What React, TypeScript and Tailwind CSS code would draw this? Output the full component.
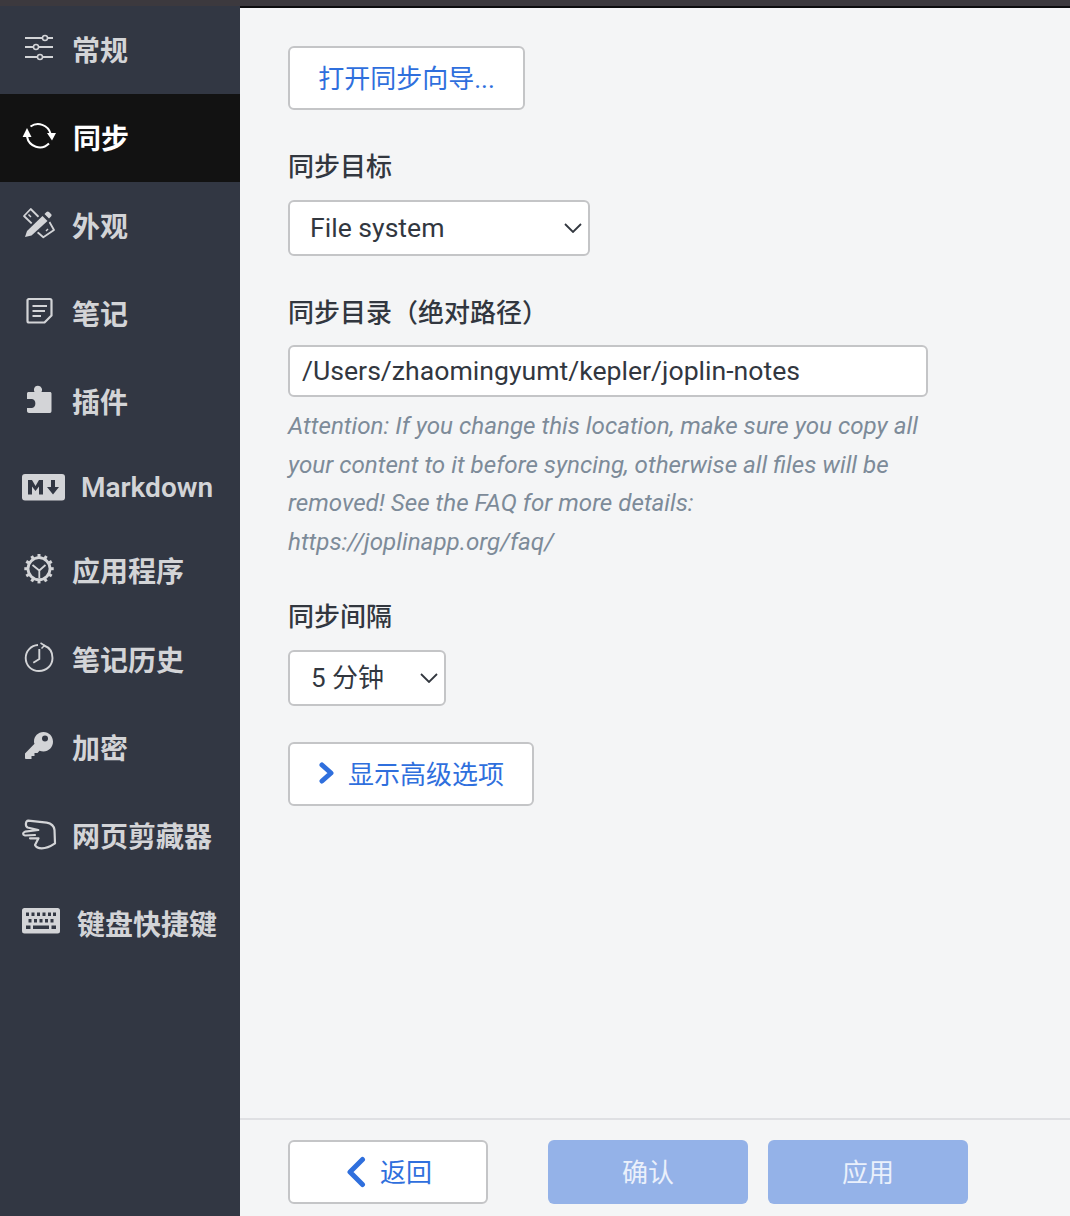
import React from "react";

const I = ({ children, w = 34 }: { children: React.ReactNode; w?: number }) => (
  <svg width={w} height="32" viewBox={`0 0 ${w} 32`} fill="none" stroke="currentColor" strokeWidth="2" className="shrink-0 overflow-visible">
    {children}
  </svg>
);

const Sliders = () => (
  <I>
    <path d="M3 4H20.500M25.500 4H31M3 13H11.500M16.500 13H31M3 23H15.500M20.500 23H31" strokeWidth="1.800" />
    <circle cx="23" cy="4" r="2.500" strokeWidth="1.500" />
    <circle cx="14" cy="13" r="2.500" strokeWidth="1.500" />
    <circle cx="18" cy="23" r="2.500" strokeWidth="1.500" />
  </I>
);
const Sync = () => (
  <I>
    <path d="M8.500 4.500A13 13 0 0 1 28.500 11.500" strokeWidth="2" />
    <path d="M5 14.500A13 13 0 0 0 27 21.500" strokeWidth="2" />
    <path d="M0.600 15L5 6L9.500 15Z" fill="currentColor" stroke="none" />
    <path d="M25 11L34 11L30 18.500Z" fill="currentColor" stroke="none" />
  </I>
);
const Pencil = () => (
  <I>
    <path d="M2 6L8.700 -1L19.700 10L13 16.700Z" strokeWidth="1.800" strokeLinejoin="round" />
    <path d="M6.500 4.500L9 7" strokeWidth="1.500" />
    <path d="M26.300 10L32 20L21.300 27.300L13 20Z" strokeWidth="1.800" strokeLinejoin="round" />
    <path d="M24 21L26 19" strokeWidth="1.500" />
    <path d="M3 27L5 20.500L23.500 2.500L29.500 8L10 25Z" fill="#323743" stroke="#323743" strokeWidth="3.500" />
    <path d="M3 27L5 21L20.500 6L25.500 11L9.500 25.500Z" fill="currentColor" stroke="none" />
    <path d="M22.500 4L24.500 2C25.300 1.200 26.200 1.200 27 2L29 4C29.800 4.800 29.800 5.700 29 6.500L27 8.500Z" fill="currentColor" stroke="none" />
  </I>
);
const Note = () => (
  <I>
    <path d="M7.500 1H29C30 1 30.500 1.500 30.500 2.500V17.500L23.500 24.500H8C7 24.500 6.500 24 6.500 23V2Z" strokeWidth="2.200" strokeLinejoin="round" />
    <path d="M11.500 8H26M11.500 13H24M11.500 18H20" strokeWidth="1.900" />
  </I>
);
const Puzzle = () => (
  <I>
    <path
      fill="currentColor"
      stroke="none"
      d="M7.500 6H13.500C13 5 12.800 4 13 3C13.500 -1.500 20 -1.500 21 3C21.200 4 21 5 20.500 6H29C29.800 6 30.500 6.700 30.500 7.500V25C30.500 26 29.800 27 29 27H8C7 27 6 26 6 25V22H11C15.500 22 15.500 13 11 13H6V7.500C6 6.700 6.700 6 7.500 6Z"
    />
  </I>
);
const MarkdownIcon = () => (
  <svg width="43" height="28" viewBox="0 0 43 28" className="shrink-0">
    <rect x="0" y="1" width="43" height="26.500" rx="3" fill="currentColor" />
    <path d="M6 21.500V7H10L13.500 13L17 7H21V21.500H17V13.500L13.500 18L10 13.500V21.500Z" fill="#323743" />
    <path d="M29 7H33V14H37L31 21.500L25 14H29Z" fill="#323743" />
  </svg>
);
const Gear = () => {
  const teeth = Array.from({ length: 12 }, (_, i) => i * 30);
  return (
    <I>
      <circle cx="17" cy="13.700" r="11" strokeWidth="2.800" />
      {teeth.map((a) => (
        <rect key={a} x="15.500" y="-1" width="3" height="4" fill="currentColor" stroke="none" transform={`rotate(${a} 17 13.700)`} />
      ))}
      <path d="M17.300 15.500L10.500 10M17.300 15.500L23.500 10M17.300 15.500V23" strokeWidth="1.800" />
    </I>
  );
};
const Clock = () => (
  <I>
    <path d="M22 1.500C27.500 3.500 30.500 8.500 30.500 14C30.500 21.500 24.500 27 17 27C9.500 27 3.700 21.500 3.700 14C3.700 7 9 1.500 16 1" strokeWidth="1.900" />
    <path d="M18.500 -1L22.500 1.500L19.500 4.500" strokeWidth="1.500" />
    <path d="M17.300 5V15L11.300 18.700" strokeWidth="1.900" />
  </I>
);
const Key = () => (
  <I>
    <path
      fill="currentColor"
      fillRule="evenodd"
      stroke="none"
      d="M22.500 0C28 0 32 4.300 32 9.700C32 15 27.500 19.500 22.500 19.500C21 19.500 19.800 19.200 18.500 18.700L16.500 21H13.500V24H10.500V27H5C4.500 27 4 26.500 4 26V21.500L13.500 11.700C13 10.800 13 10 13 9.500C13 4.300 17 0 22.500 0ZM24 3.500A3 3 0 1 0 24 9.500A3 3 0 1 0 24 3.500Z"
    />
  </I>
);
const Clipper = () => (
  <I>
    <path
      d="M6.300 0.700L24.700 2.700C29 3.500 32 6 32.500 10L33 23.300C29 26 24 28.300 19.700 28.300C16.500 28.300 14 27 13 25L16.500 18.300H8M16.300 10L5.500 7.500C3 6 3.500 1 6.300 0.700M16.300 10L3 11.700C0.500 12.500 0.500 15 3 15.500L13 15"
      strokeWidth="2.200"
      strokeLinejoin="round"
      strokeLinecap="round"
    />
  </I>
);
const Keyboard = () => (
  <svg width="38" height="26" viewBox="0 0 38 26" className="shrink-0 mb-[6px]">
    <rect x="0" y="0" width="38" height="25.500" rx="2.500" fill="currentColor" />
    <g fill="#323743">
      {[4, 9.500, 15, 20.500, 26, 31].map((x) => (
        <rect key={x} x={x} y="4.500" width="3" height="3.500" />
      ))}
      {[6.500, 12, 17.500, 23, 28.500].map((x) => (
        <rect key={x} x={x} y="11" width="3" height="3.500" />
      ))}
      <rect x="4" y="17.500" width="4.500" height="3.500" />
      <rect x="11" y="17.500" width="16" height="3.500" />
      <rect x="29.500" y="17.500" width="4.500" height="3.500" />
    </g>
  </svg>
);

const items: { icon: React.ReactNode; label: string; cls: string; text?: string; active?: boolean }[] = [
  { icon: <Sliders />, label: "常规", cls: "h-[88px] pl-[22px] gap-[16px]" },
  { icon: <Sync />, label: "同步", cls: "h-[88px] pl-[22px] gap-[17px]", active: true },
  { icon: <Pencil />, label: "外观", cls: "h-[88px] pl-[22px] gap-[16px]" },
  { icon: <Note />, label: "笔记", cls: "h-[88px] pl-[21px] gap-[17px]" },
  { icon: <Puzzle />, label: "插件", cls: "h-[88px] pl-[21px] gap-[17px]" },
  { icon: <MarkdownIcon />, label: "Markdown", cls: "h-[81px] pl-[22px] gap-[16px]", text: "mt-[2px]" },
  { icon: <Gear />, label: "应用程序", cls: "h-[88px] pl-[22px] gap-[16px]" },
  { icon: <Clock />, label: "笔记历史", cls: "h-[89px] pl-[22px] gap-[16px]" },
  { icon: <Key />, label: "加密", cls: "h-[88px] pl-[21px] gap-[17px]" },
  { icon: <Clipper />, label: "网页剪藏器", cls: "h-[88px] pl-[22px] gap-[16px]" },
  { icon: <Keyboard />, label: "键盘快捷键", cls: "h-[88px] pl-[22px] gap-[17px]" },
];

const Label = ({ children, className = "" }: { children: React.ReactNode; className?: string }) => (
  <div className={`pt-[2px] text-[26px] leading-[34px] font-medium text-[#32373f] ${className}`}>{children}</div>
);

const SelectChevron = () => (
  <svg width="18" height="10" viewBox="0 0 18 10" fill="none" stroke="#32373f" strokeWidth="1.800" className="shrink-0">
    <path d="M1 1L9 9L17 1" />
  </svg>
);

export default function App() {
  return (
    <div className="w-[1070px] h-[1216px] flex flex-col overflow-hidden bg-[#f4f5f6]">
      <div className="h-[8px] shrink-0 bg-[#3c393e] border-b-2 border-[#0c0c0e]" />
      <div className="flex flex-1 min-h-0 font-['Roboto','Noto_Sans_CJK_SC',sans-serif]">
        <nav className="w-[240px] shrink-0 bg-[#323743] -mt-[2px] flex flex-col">
          {items.map((it) => (
            <div
              key={it.label}
              className={`${it.cls} shrink-0 flex items-center text-[28px] font-semibold ${
                it.active ? "bg-[#121212] text-white" : "text-[#d3d4d7]"
              }`}
            >
              {it.icon}
              <span className={`${it.text ?? "mt-[4px]"} whitespace-nowrap`}>{it.label}</span>
            </div>
          ))}
        </nav>
        <main className="flex-1 min-w-0 flex flex-col">
          <div className="flex-1 min-h-0 pl-[48px] pt-[38px] flex flex-col items-start">
            <button className="h-[64px] w-[237px] pt-[2px] rounded-[6px] border-2 border-[#c4c5c7] bg-white text-[26px] text-[#2f6fdd]">
              打开同步向导...
            </button>
            <Label className="mt-[38px]">同步目标</Label>
            <div className="mt-[16px] h-[56px] w-[302px] rounded-[6px] border-2 border-[#c4c5c7] bg-white flex items-center justify-between pl-[20px] pr-[6px] text-[26.600px] text-[#32373f]">
              <span>File system</span>
              <SelectChevron />
            </div>
            <Label className="mt-[38px]">同步目录（绝对路径）</Label>
            <div className="mt-[15px] h-[52px] w-[640px] pt-[2px] rounded-[6px] border-2 border-[#c4c5c7] bg-white flex items-center pl-[12px] text-[26.640px] text-[#32373f]">
              /Users/zhaomingyumt/kepler/joplin-notes
            </div>
            <p className="mt-[10px] w-[650px] text-[24.200px] leading-[38.500px] italic text-[#7d8b99]">
              Attention: If you change this location, make sure you copy all
              <br />
              your content to it before syncing, otherwise all files will be
              <br />
              removed! See the FAQ for more details:
              <br />
              https://joplinapp.org/faq/
            </p>
            <Label className="mt-[37px]">同步间隔</Label>
            <div className="mt-[16px] h-[56px] w-[158px] rounded-[6px] border-2 border-[#c4c5c7] bg-white flex items-center justify-between pl-[21px] pr-[6px] text-[26px] text-[#32373f]">
              <span>5 分钟</span>
              <SelectChevron />
            </div>
            <button className="mt-[36px] h-[64px] w-[246px] rounded-[6px] border-2 border-[#c4c5c7] bg-white flex items-center pl-[29px] gap-[14px] text-[26px] text-[#2f6fdd]">
              <svg width="15" height="22" viewBox="0 0 15 22" fill="none" stroke="currentColor" strokeWidth="5" strokeLinecap="round" strokeLinejoin="round" className="shrink-0 mt-[-2px]">
                <path d="M3 3L12 11L3 19" />
              </svg>
              <span className="mt-[2px]">显示高级选项</span>
            </button>
          </div>
          <div className="h-[98px] shrink-0 border-t-2 border-[#dfe0e3] pl-[48px] pt-[20px] flex items-start">
            <button className="h-[64px] w-[200px] rounded-[6px] border-2 border-[#c4c5c7] bg-white flex items-center pl-[56px] gap-[14px] text-[26px] text-[#2f6fdd]">
              <svg width="20" height="32" viewBox="0 0 20 32" fill="none" stroke="currentColor" strokeWidth="5" strokeLinecap="round" strokeLinejoin="round" className="shrink-0">
                <path d="M16.500 3.500L4 16L16.500 28.500" />
              </svg>
              <span className="mt-[2px]">返回</span>
            </button>
            <button className="ml-[60px] h-[64px] w-[200px] pt-[2px] rounded-[6px] bg-[#94b2e8] text-[26px] text-[#eaf0fb]">确认</button>
            <button className="ml-[20px] h-[64px] w-[200px] pt-[2px] rounded-[6px] bg-[#94b2e8] text-[26px] text-[#eaf0fb]">应用</button>
          </div>
        </main>
      </div>
    </div>
  );
}
